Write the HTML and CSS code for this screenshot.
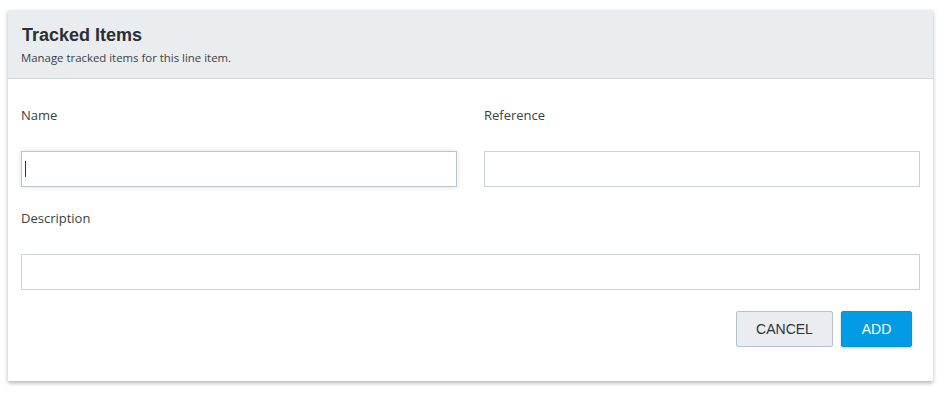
FILE: index.html
```
<!DOCTYPE html>
<html lang="en">
<head>
    <meta charset="UTF-8">
    <meta name="viewport" content="width=device-width, initial-scale=1.0">
    <title>Tracked Items</title>
    <link rel="stylesheet" href="styles.css">
</head>
<body>
    <div class="panel">
        <div class="panel-header">
            <h2>Tracked Items</h2>
            <p>Manage tracked items for this line item.</p>
        </div>

        <div class="panel-body">
            <div class="form-row">
                <div class="field">
                    <label for="name">Name</label>
                    <div class="input-wrap">
                        <input type="text" id="name" class="focused">
                        <span class="caret"></span>
                    </div>
                </div>
                <div class="field">
                    <label for="reference">Reference</label>
                    <input type="text" id="reference">
                </div>
            </div>

            <div class="field">
                <label for="description">Description</label>
                <input type="text" id="description">
            </div>

            <div class="actions">
                <button class="btn btn-cancel">Cancel</button>
                <button class="btn btn-add">Add</button>
            </div>
        </div>
    </div>
</body>
</html>
```

FILE: styles.css
```
body {
    font-family: "Open Sans", Lato, sans-serif;
    margin: 0;
    padding: 10px 13px 12px 8px;
    background-color: #fff;
    color: #333;
}

.panel {
    background-color: #fff;
    box-shadow: 0 2px 4px rgba(0, 0, 0, 0.3);
}

.panel-header {
    background-color: #e9edf0;
    border-bottom: 1px solid #cfd6db;
    padding: 15px 14px 0;
    height: 53px;
}

.panel-header h2 {
    font-family: "Liberation Sans", Arial, sans-serif;
    font-size: 18px;
    font-weight: bold;
    margin: 0;
    line-height: 20px;
    color: #2a2f33;
}

.panel-header p {
    font-size: 11.4px;
    margin: 6px 0 0 -1px;
    line-height: 14px;
    color: #3a3f44;
}

.panel-body {
    padding: 26px 13px 34px;
}

.form-row {
    display: grid;
    grid-template-columns: 1fr 1fr;
    gap: 27px;
    margin-bottom: 21px;
}

.field label {
    display: block;
    font-size: 13px;
    line-height: 20px;
    margin-bottom: 26px;
    color: #3a3f44;
}

.field input {
    display: block;
    width: 100%;
    height: 36px;
    box-sizing: border-box;
    border: 1px solid #c8d2d8;
    padding: 0 4px;
    font-size: 14px;
    outline: none;
    background: #fff;
}

.field input.focused {
    border-color: #b7c5cd;
    box-shadow: 0 0 6px rgba(0, 0, 0, 0.12);
}

.input-wrap {
    position: relative;
}

/* text cursor in the focused field */
.caret {
    position: absolute;
    left: 4px;
    top: 10px;
    width: 1px;
    height: 16px;
    background-color: #333;
}

.actions {
    display: flex;
    justify-content: flex-end;
    gap: 8px;
    margin-top: 21px;
    padding-right: 8px;
}

.btn {
    font-family: "Liberation Sans", Arial, sans-serif;
    font-size: 14px;
    text-transform: uppercase;
    height: 36px;
    border-radius: 2px;
    cursor: pointer;
}

.btn-cancel {
    width: 97px;
    background-color: #e9edf0;
    border: 1px solid #b5c2ca;
    color: #2f3338;
}

.btn-add {
    width: 71px;
    background-color: #039be5;
    border: 1px solid #0392d8;
    color: #fff;
    box-shadow: 0 1px 3px rgba(0, 0, 0, 0.2);
}
```
